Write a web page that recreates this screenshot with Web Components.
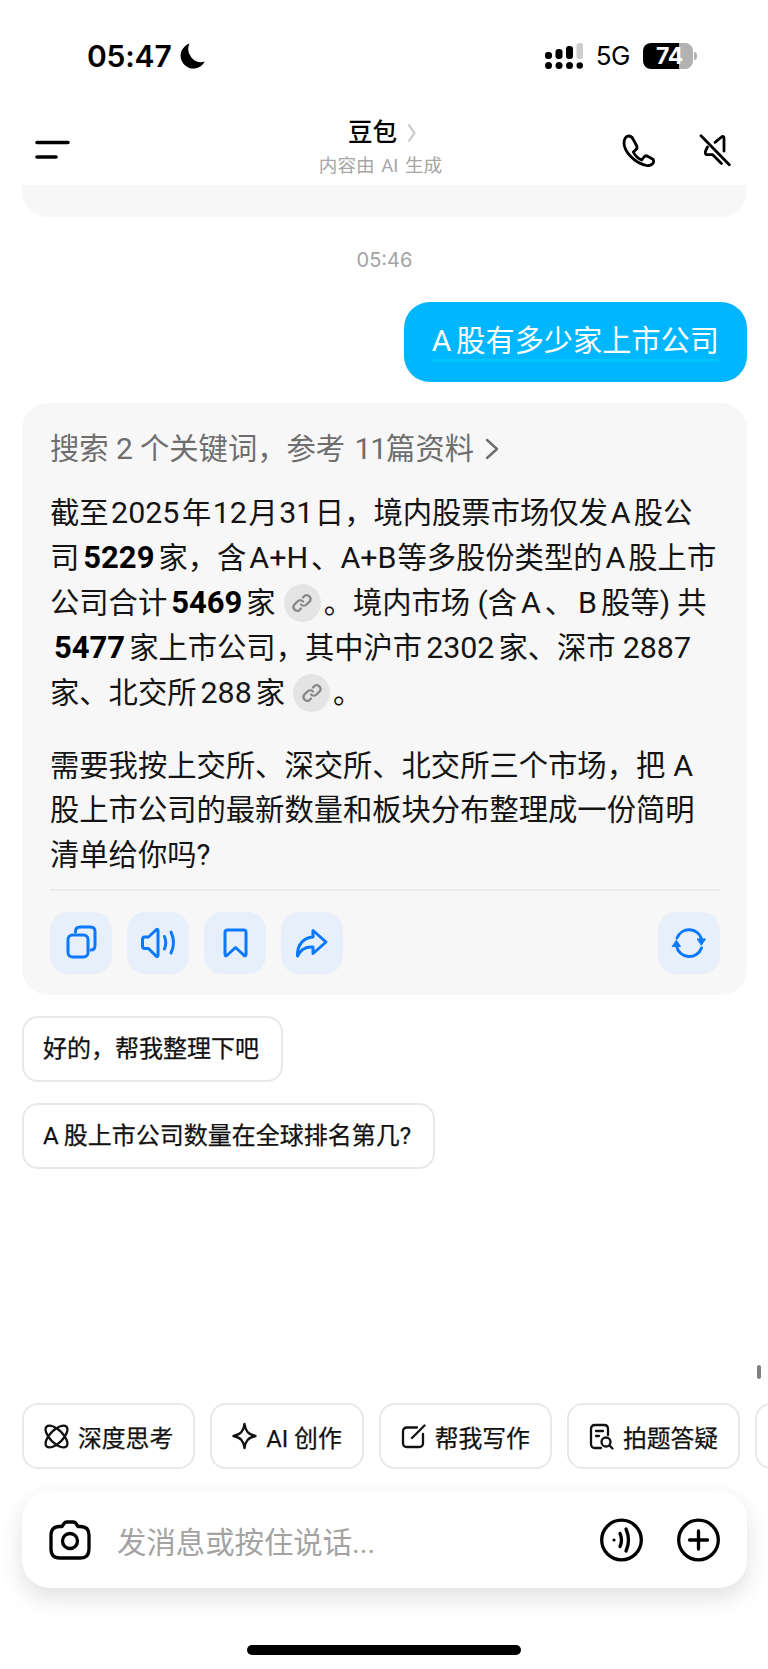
<!DOCTYPE html>
<html lang="zh">
<head>
<meta charset="utf-8">
<title>豆包</title>
<style>
  html, body { margin: 0; padding: 0; background: #fff; }
  body { font-family: Roboto, "Noto Sans CJK SC", sans-serif; color: #111; }
</style>
</head>
<body>
<chat-page>
  <status-bar slot="top"></status-bar>
  <chat-header slot="top"></chat-header>
  <chat-time>05:46</chat-time>
  <user-bubble>A<span style="margin-left:5px;font-size:29.2px">股有多少家上市公司</span></user-bubble>
  <answer-card></answer-card>
  <suggest-chip>好的，帮我整理下吧</suggest-chip>
  <suggest-chip>A<span style="margin-left:5px">股上市公司数量在全球排名第几?</span></suggest-chip>
  <tool-row slot="bottom"></tool-row>
  <input-bar slot="bottom"></input-bar>
  <home-bar slot="bottom"></home-bar>
</chat-page>

<script>
const BLUE = '#0a78ff';

class ChatPage extends HTMLElement {
    connectedCallback() {
        this.attachShadow({ mode: 'open' });
        this.shadowRoot.innerHTML = `
            <style>
                :host { display: flex; flex-direction: column; height: 1669px; position: relative; overflow: hidden; }
                .stub { height: 32px; margin: 0 21px 0 22px; background: #f7f7f7; border-radius: 0 0 26px 26px; flex: none; }
                .chat { flex: 1; display: flex; flex-direction: column; padding: 0 21px 0 22px; min-height: 0; }
                .scroll { position: absolute; left: 757px; top: 1365px; width: 4px; height: 14px; border-radius: 2px; background: #808080; }
            </style>
            <slot name="top"></slot>
            <div class="stub"></div>
            <div class="chat"><slot></slot></div>
            <div class="scroll"></div>
            <slot name="bottom"></slot>
        `;
    }
}

class StatusBar extends HTMLElement {
    connectedCallback() {
        this.attachShadow({ mode: 'open' });
        this.shadowRoot.innerHTML = `
            <style>
                :host { display: flex; align-items: center; height: 112px; padding: 0 71px 0 87px; color: #000; font-family: Inter, sans-serif; }
                .time { font-size: 30px; font-weight: 600; letter-spacing: -.2px; line-height: 1; }
                .moon { margin-left: 8px; display: block; }
                .right { margin-left: auto; display: flex; align-items: center; }
                .net { font-size: 26px; margin: 0 13px 0 13px; line-height: 1; letter-spacing: -.5px; }
                .batt { width: 50px; height: 26px; border-radius: 8px; box-sizing: border-box; padding-left: 13px;
                        background: linear-gradient(90deg, #000 36px, #b2b2b2 36px); color: #fff;
                        font-size: 23px; font-weight: 700; line-height: 26px; letter-spacing: -.3px; }
                .nub { width: 3px; height: 8px; margin-left: 1px; border-radius: 0 3px 3px 0; background: #b2b2b2; }
            </style>
            <span class="time">05:47</span>
            <svg class="moon" width="25" height="26" viewBox="0 0 25 26"><path fill="#000" d="M9.500 .6A12.800 12.800 0 1 0 24.800 18.600 13 13 0 0 1 9.500 .6Z"/></svg>
            <div class="right">
                <svg width="38" height="26" viewBox="0 0 38 26" fill="#000">
                    <rect x="0" y="9" width="7" height="7" rx="3"/><rect x="10.500" y="6" width="7" height="10" rx="3"/>
                    <rect x="21" y="3" width="7" height="13" rx="3"/><rect x="31.500" y="0" width="6.500" height="16" rx="2.500" fill="#ccc"/>
                    <circle cx="3.500" cy="22.500" r="3.500"/><circle cx="14" cy="22.500" r="3.500"/>
                    <circle cx="24.500" cy="22.500" r="3.500"/><circle cx="34.800" cy="22.500" r="3.300"/>
                </svg>
                <span class="net">5G</span>
                <div class="batt">74</div>
                <div class="nub"></div>
            </div>
        `;
    }
}

class ChatHeader extends HTMLElement {
    connectedCallback() {
        this.attachShadow({ mode: 'open' });
        this.shadowRoot.innerHTML = `
            <style>
                :host { display: flex; align-items: center; height: 73px; padding: 0 36px 0 35px; position: relative; }
                .mid { position: absolute; left: 0; right: 0; top: 8px; display: flex; flex-direction: column; align-items: center; }
                .title { font-size: 24.500px; font-weight: 500; line-height: 26px; color: #000; display: flex; align-items: center; gap: 10px; margin-right: 4px; }
                .sub { font-size: 18.600px; word-spacing: 2px; line-height: 20px; color: #a6a6a6; margin-top: 10px; margin-right: 7px; }
                .menu { margin-top: 2px; }
                .acts { margin-left: auto; display: flex; gap: 43px; align-items: center; margin-top: 4px; }
            </style>
            <svg class="menu" width="35" height="20" viewBox="0 0 35 20" fill="none" stroke="#000" stroke-width="3.600" stroke-linecap="round">
                <path d="M2 2.500H33M2 17H21"/>
            </svg>
            <div class="mid">
                <div class="title">豆包
                    <svg width="9" height="20" viewBox="0 0 9 20" fill="none" stroke="#cfcfcf" stroke-width="2.400" stroke-linejoin="round"><path d="M1.500 1.500 7.500 10 1.500 18.500"/></svg>
                </div>
                <div class="sub">内容由 AI 生成</div>
            </div>
            <div class="acts">
                <svg width="35" height="33" viewBox="0 0 35 33" fill="none" stroke="#000" stroke-width="2.800" stroke-linejoin="round" stroke-linecap="round">
                    <path d="M3 9C3 5 5 2 7.500 2 9.500 2 11 3 12 5L15.500 11.500C16.500 13.500 16 15 14.500 16L12.300 18C14 21.500 17 24.500 20.700 26L23 23C24 21.700 25.500 21.500 27 22.500L31.500 25C33 26 33 28 31.800 29.500 30 31.500 28 32 25.500 31.500 13 29 3 17 3 9Z"/>
                </svg>
                <svg width="33" height="33" viewBox="0 0 33 33" fill="none" stroke="#000" stroke-width="2.800" stroke-linejoin="round" stroke-linecap="round">
                    <path d="M2 1.700 30.300 30.700"/>
                    <path d="M16 8.300 22.500 3C24 2 25 2.500 25 4V17"/>
                    <path d="M8.500 13 7 16C6 18 6 20.700 8 20.700H13.700L22.500 29.500"/>
                </svg>
            </div>
        `;
    }
}

class ChatTime extends HTMLElement {
    connectedCallback() {
        this.attachShadow({ mode: 'open' });
        this.shadowRoot.innerHTML = `
            <style>
                :host { display: block; margin: 30px 0 29px; text-align: center; font-family: Inter, sans-serif; font-size: 20px; line-height: 26px; color: #a3a3a3; }
            </style>
            <slot></slot>
        `;
    }
}

class UserBubble extends HTMLElement {
    connectedCallback() {
        this.attachShadow({ mode: 'open' });
        this.shadowRoot.innerHTML = `
            <style>
                :host { display: block; align-self: flex-end; box-sizing: border-box; height: 80px; padding: 20px 28px 0 28px;
                        background: #00b6ff; border-radius: 26px; color: #fff; font-size: 30px; line-height: 37px; white-space: nowrap; }
                .line { display: block; border-bottom: 3px solid #00c6ff; height: 37px; }
            </style>
            <span class="line"><slot></slot></span>
        `;
    }
}

class CiteChip extends HTMLElement {
    connectedCallback() {
        this.attachShadow({ mode: 'open' });
        this.shadowRoot.innerHTML = `
            <style>
                :host { display: inline-flex; align-items: center; justify-content: center; width: 37px; height: 38px; border-radius: 50%;
                        background: #e4e4e4; vertical-align: -1.500px; margin: -10px 3px -10px 8px; }
            </style>
            <svg width="22" height="24" viewBox="0 0 22 24" fill="none" stroke="#868686" stroke-width="2.300" stroke-linecap="round">
                <path d="M12 6.500 14 4.500A3.900 3.900 0 0 1 19 10L15.500 13.500A3.900 3.900 0 0 1 10 13.500"/>
                <path d="M10 17.500 8 19.500A3.900 3.900 0 0 1 3 14L6.500 10.500A3.900 3.900 0 0 1 12 10.500"/>
            </svg>
        `;
    }
}

class ActionButton extends HTMLElement {
    connectedCallback() {
        const paths = {
            copy: `<rect x="18" y="23" width="20" height="22" rx="4.500"/><path d="M25.500 20V19.500Q25.500 15 30 15H40.500Q45 15 45 19.500V33.500Q45 38 41 38"/>`,
            sound: `<path d="M31 18.500V43Q31 45.500 29 44L21.500 36.500H18Q15.500 36.500 15.500 34V27.500Q15.500 25 18 25H21.500L29 18Q31 16.500 31 18.500Z"/><path d="M37.500 24.500Q40 30.500 37.500 37"/><path d="M44 20Q49 30.500 44 41"/>`,
            mark: `<path d="M21 20.500Q21 18 23.500 18H39.500Q42 18 42 20.500V42Q42 45 39.700 43L31.500 35.500 23.300 43Q21 45 21 42Z"/>`,
            share: `<path d="M32 18.500 45 30 32 41.500V35C25 34.500 19.500 37.500 16.500 44 16 33 22.500 25.500 32 25Z"/>`,
            refresh: `<path d="M19 26A13 13 0 0 1 43.500 27"/><path d="M43.500 36A13 13 0 0 1 18.500 34"/><path fill="${BLUE}" stroke-width="1" d="M39.500 27H47.500L43.500 33Z"/><path fill="${BLUE}" stroke-width="1" d="M14.500 34.500H22.500L18.500 28.500Z"/>`
        };
        this.attachShadow({ mode: 'open' });
        this.shadowRoot.innerHTML = `
            <style>
                :host { display: block; width: 62px; height: 62px; border-radius: 18px; background: #e7f0fa; flex: none; }
                svg { display: block; }
            </style>
            <svg width="62" height="62" viewBox="0 0 62 62" fill="none" stroke="${BLUE}" stroke-width="3" stroke-linejoin="round" stroke-linecap="round">
                ${paths[this.getAttribute('icon')]}
            </svg>
        `;
    }
}

class AnswerCard extends HTMLElement {
    connectedCallback() {
        this.attachShadow({ mode: 'open' });
        this.shadowRoot.innerHTML = `
            <style>
                :host { display: block; box-sizing: border-box; margin-top: 21px; padding: 23px 27px 21px 28px; height: 592px;
                        background: #f7f7f7; border-radius: 26px; font-size: 29.300px; line-height: 45px; color: #141414; white-space: nowrap; }
                .search { display: flex; align-items: center; height: 45px; color: #6e6e6e; margin-bottom: 19px; }
                .search svg { margin-left: 11px; }
                .ln { display: block; height: 45px; }
                p { margin: 0 0 28px; }
                p:last-of-type { margin-bottom: 0; }
                b { font-weight: 700; color: #000; }
                .n { font-size: 30.400px; margin: 0 3px; }
                .t { font-size: 30.400px; margin: 0 1.500px; }
                .y { font-size: 30.400px; margin: 0 2.500px; }
                .m { font-size: 30.400px; margin: 0 4px; }
                .b { font-size: 31px; margin: 0 4px; }
                .l { font-size: 30.400px; margin-left: 7px; }
                .k { font-size: 30.400px; margin-left: 8px; }
                .r { font-size: 30.400px; margin-right: 1px; }
                .x { font-size: 30px; }
                .e { font-size: 30px; margin: 0 0 0 2px; letter-spacing: -1px; }
                hr { border: 0; height: 2px; background: #ebebeb; margin: 11px 0 21px; }
                .acts { display: flex; gap: 15px; }
                .refresh { margin-left: auto; }
            </style>
            <div class="search"><span>搜索 <span class="x">2</span> 个关键词，参考 <span class="e">11</span>篇资料</span>
                <svg width="14" height="22" viewBox="0 0 14 22" fill="none" stroke="#6e6e6e" stroke-width="2.400" stroke-linecap="round" stroke-linejoin="round"><path d="M2 2 12 11 2 20"/></svg>
            </div>
            <p>
                <span class="ln">截至<span class="y">2025</span>年<span class="t">12</span>月<span class="t">31</span>日，境内股票市场仅发<span class="n">A</span>股公</span>
                <span class="ln">司<b class="b">5229</b>家，含<span class="n">A+H</span>、<span class="r">A+B</span>等多股份类型的<span class="n">A</span>股上市</span>
                <span class="ln">公司合计<b class="b">5469</b>家<cite-chip></cite-chip>。境内市场 <span class="x">(</span>含<span class="m">A</span>、<span class="m">B</span>股等<span class="x">)</span> 共</span>
                <span class="ln"><b class="b">5477</b>家上市公司，其中沪市<span class="m">2302</span>家、深市<span class="l">2887</span></span>
                <span class="ln">家、北交所<span class="m">288</span>家<cite-chip></cite-chip>。</span>
            </p>
            <p>
                <span class="ln">需要我按上交所、深交所、北交所三个市场，把<span class="k">A</span></span>
                <span class="ln">股上市公司的最新数量和板块分布整理成一份简明</span>
                <span class="ln">清单给你吗?</span>
            </p>
            <hr>
            <div class="acts">
                <action-button icon="copy"></action-button>
                <action-button icon="sound"></action-button>
                <action-button icon="mark"></action-button>
                <action-button icon="share"></action-button>
                <action-button class="refresh" icon="refresh"></action-button>
            </div>
        `;
    }
}

class SuggestChip extends HTMLElement {
    connectedCallback() {
        this.attachShadow({ mode: 'open' });
        this.shadowRoot.innerHTML = `
            <style>
                :host { display: block; align-self: flex-start; box-sizing: border-box; height: 66px; margin-top: 21px; padding: 0 22px 0 19px;
                        border: 2px solid #e8e8e8; border-radius: 16px; background: #fff; color: #111;
                        font-size: 24px; -webkit-text-stroke: .25px #111; line-height: 62px; white-space: nowrap; }
            </style>
            <slot></slot>
        `;
    }
}

class ToolChip extends HTMLElement {
    connectedCallback() {
        this.attachShadow({ mode: 'open' });
        this.shadowRoot.innerHTML = `
            <style>
                :host { display: flex; align-items: center; box-sizing: border-box; flex: none; height: 66px; padding: 0 20px;
                        gap: 9px; border: 2px solid #e8e8e8; border-radius: 16px; background: #fff; color: #111;
                        font-size: 23.800px; -webkit-text-stroke: .25px #111; white-space: nowrap; }
            </style>
            <slot name="icon"></slot><slot></slot>
        `;
    }
}

class ToolRow extends HTMLElement {
    connectedCallback() {
        this.attachShadow({ mode: 'open' });
        this.shadowRoot.innerHTML = `
            <style>
                :host { display: flex; gap: 15px; padding-left: 22px; overflow: hidden; flex: none; }
                svg { display: block; flex: none; }
            </style>
            <tool-chip>
                <svg slot="icon" width="25" height="25" viewBox="0 0 25 25" fill="none" stroke="#111" stroke-width="2.300">
                    <ellipse cx="12.500" cy="12.500" rx="6.500" ry="14" transform="rotate(-45 12.500 12.500)"/>
                    <ellipse cx="12.500" cy="12.500" rx="6.500" ry="14" transform="rotate(45 12.500 12.500)"/>
                </svg>深度思考
            </tool-chip>
            <tool-chip>
                <svg slot="icon" width="25" height="28" viewBox="0 0 25 28" fill="none" stroke="#111" stroke-width="2.300" stroke-linejoin="round">
                    <path d="M12.500 2C13.500 9 16 12.500 23.500 14 16 15.500 13.500 19 12.500 26 11.500 19 9 15.500 1.500 14 9 12.500 11.500 9 12.500 2Z"/>
                </svg>AI 创作
            </tool-chip>
            <tool-chip>
                <svg slot="icon" width="25" height="25" viewBox="0 0 25 25" fill="none" stroke="#111" stroke-width="2.300" stroke-linecap="round">
                    <path d="M16 3.500H6Q2 3.500 2 7.500V19Q2 23 6 23H18Q22 23 22 19V10"/><path d="M11 14 23.500 1.500"/>
                </svg>帮我写作
            </tool-chip>
            <tool-chip>
                <svg slot="icon" width="25" height="27" viewBox="0 0 25 27" fill="none" stroke="#111" stroke-width="2.300" stroke-linecap="round">
                    <path d="M12 25H6Q2 25 2 21V6Q2 2 6 2H15Q19 2 19 6V12"/><path d="M7 8H14M7 13H10"/><circle cx="17" cy="19" r="4.500"/><path d="M20.500 22.500 23.500 25.500"/>
                </svg>拍题答疑
            </tool-chip>
            <tool-chip style="width:60px"></tool-chip>
        `;
    }
}

class InputBar extends HTMLElement {
    connectedCallback() {
        this.attachShadow({ mode: 'open' });
        this.shadowRoot.innerHTML = `
            <style>
                :host { display: flex; align-items: center; box-sizing: border-box; height: 97px; margin: 22px 21px 0 22px; padding: 0 27px;
                        background: #fff; border-radius: 28px; box-shadow: 0 10px 24px rgba(0,0,0,.12); flex: none; }
                .ph { margin-left: 26px; font-size: 29.400px; color: #a3a3a3; white-space: nowrap; }
                .r { margin-left: auto; display: flex; gap: 34px; }
                svg { display: block; flex: none; }
            </style>
            <svg width="42" height="40" viewBox="0 0 42 40" fill="none" stroke="#000" stroke-width="3.300" stroke-linejoin="round">
                <path d="M13 6.500 15 3.500Q16 2 18 2H24Q26 2 27 3.500L29 6.500H31.500Q40 6.500 40 15V29Q40 38 31.500 38H10.500Q2 38 2 29V15Q2 6.500 10.500 6.500Z"/>
                <circle cx="21" cy="21" r="7.500"/>
            </svg>
            <span class="ph">发消息或按住说话...</span>
            <div class="r">
                <svg width="43" height="44" viewBox="0 0 43 44" fill="none" stroke="#000" stroke-width="3.300" stroke-linecap="round">
                    <circle cx="21.500" cy="22" r="19.800"/>
                    <circle cx="14" cy="22" r="1.600" fill="#000" stroke="none"/>
                    <path d="M20 15.500Q23 22 20 28.500"/><path d="M26 11Q31 22 26 33"/>
                </svg>
                <svg width="43" height="44" viewBox="0 0 43 44" fill="none" stroke="#000" stroke-width="3.300" stroke-linecap="round">
                    <circle cx="21.500" cy="22" r="19.800"/>
                    <path d="M21.500 13V31M12.500 22H30.500"/>
                </svg>
            </div>
        `;
    }
}

class HomeBar extends HTMLElement {
    connectedCallback() {
        this.attachShadow({ mode: 'open' });
        this.shadowRoot.innerHTML = `
            <style>
                :host { display: block; flex: none; height: 81px; box-sizing: border-box; padding-top: 57px; }
                div { width: 274px; height: 10px; margin: 0 auto; border-radius: 5px; background: #000; }
            </style>
            <div></div>
        `;
    }
}

customElements.define('chat-page', ChatPage);
customElements.define('status-bar', StatusBar);
customElements.define('chat-header', ChatHeader);
customElements.define('chat-time', ChatTime);
customElements.define('user-bubble', UserBubble);
customElements.define('cite-chip', CiteChip);
customElements.define('action-button', ActionButton);
customElements.define('answer-card', AnswerCard);
customElements.define('suggest-chip', SuggestChip);
customElements.define('tool-chip', ToolChip);
customElements.define('tool-row', ToolRow);
customElements.define('input-bar', InputBar);
customElements.define('home-bar', HomeBar);
</script>
</body>
</html>
